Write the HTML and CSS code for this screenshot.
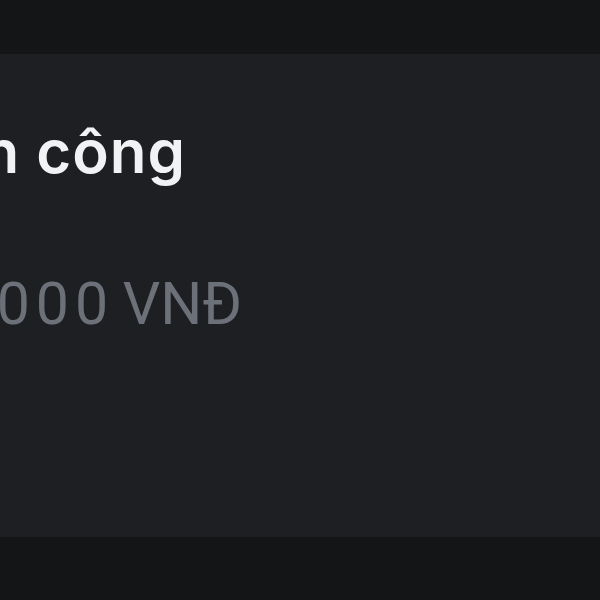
FILE: index.html
```html
<!DOCTYPE html>
<html lang="vi">
<head>
<meta charset="utf-8">
<link rel="stylesheet" href="styles.css">
</head>
<body>
<div class="topbar"></div>
<section class="card">
  <div class="line title-line"><span class="title">Tiền công</span></div>
  <div class="line amount-line"><span class="amount"><span class="digits">500.000</span> VNĐ</span></div>
</section>
<div class="bottombar"></div>
</body>
</html>
```
FILE: styles.css
```css
html, body {
  margin: 0;
  padding: 0;
  background: #141517;
  width: 600px;
  height: 600px;
  overflow: hidden;
  font-family: Inter, "Noto Sans", sans-serif;
}
.topbar {
  height: 54px;
}
.card {
  height: 483px;
  background: #1e1f22;
  box-sizing: border-box;
  padding-top: 67px;
  overflow: hidden;
}
.line {
  display: flex;
  justify-content: flex-end;
  white-space: nowrap;
}
.title-line {
  width: 186px;
}
.title {
  font-size: 60px;
  font-weight: 600;
  letter-spacing: 1px;
  color: #f1f2f4;
  line-height: 1;
}
.amount-line {
  width: 242px;
  margin-top: 93px;
}
.amount {
  font-family: Roboto, "Noto Sans", sans-serif;
  font-size: 59px;
  font-weight: 400;
  color: #6c7179;
  line-height: 1;
}
.digits {
  letter-spacing: 6px;
  margin-right: -6px;
}
```
